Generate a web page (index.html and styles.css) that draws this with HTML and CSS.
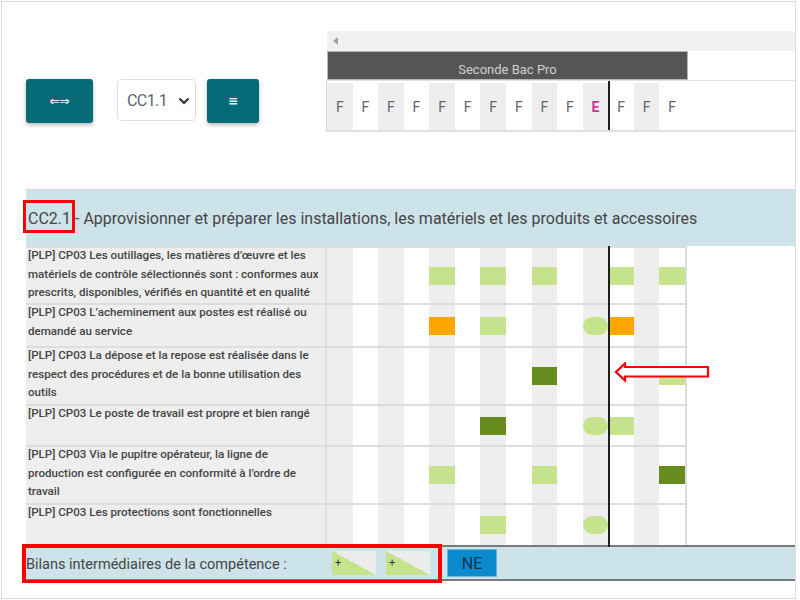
FILE: index.html
```html
<!DOCTYPE html>
<html lang="fr">
<head>
<meta charset="utf-8">
<title>Compétences</title>
<link rel="stylesheet" href="styles.css">
</head>
<body>
<div class="frame">
  <div class="top">
    <div class="controls">
      <button class="btn btn-wide">⇐⇒</button>
      <div class="select"><span>CC1.1</span><svg class="chev" width="12" height="8" viewBox="0 0 12 8"><path d="M1.5 1.5 L6 6 L10.5 1.5" fill="none" stroke="#333" stroke-width="2.2"/></svg></div>
      <button class="btn btn-narrow">≡</button>
    </div>
    <div class="timeline">
      <div class="scroll"><svg width="5" height="8" viewBox="0 0 5 8"><path d="M5 0 L0 4 L5 8 Z" fill="#a3a3a3"/></svg></div>
      <div class="period">Seconde Bac Pro</div>
      <div class="letters">
        <div class="grid14">
          <span class="col">F</span><span class="col">F</span><span class="col">F</span><span class="col">F</span><span class="col">F</span><span class="col">F</span><span class="col">F</span><span class="col">F</span><span class="col">F</span><span class="col">F</span><span class="col col-e">E</span><span class="col now">F</span><span class="col">F</span><span class="col">F</span>
        </div>
      </div>
    </div>
  </div>

  <div class="comp">
    <div class="comp-head">CC2.1 - Approvisionner et préparer les installations, les matériels et les produits et accessoires</div>

    <div class="row h57">
      <div class="label"><p>[PLP] CP03 Les outillages, les matières d’œuvre et les matériels de contrôle sélectionnés sont : conformes aux prescrits, disponibles, vérifiés en quantité et en qualité</p></div>
      <div class="cells grid14">
        <span class="cell"></span><span class="cell"></span><span class="cell"></span><span class="cell"></span><span class="cell"><i class="m lg"></i></span><span class="cell"></span><span class="cell"><i class="m lg"></i></span><span class="cell"></span><span class="cell"><i class="m lg"></i></span><span class="cell"></span><span class="cell"></span><span class="cell now"><i class="m lg"></i></span><span class="cell"></span><span class="cell"><i class="m lg"></i></span>
      </div>
    </div>

    <div class="row h43">
      <div class="label"><p>[PLP] CP03 L’acheminement aux postes est réalisé ou demandé au service</p></div>
      <div class="cells grid14">
        <span class="cell"></span><span class="cell"></span><span class="cell"></span><span class="cell"></span><span class="cell"><i class="m or"></i></span><span class="cell"></span><span class="cell"><i class="m lg"></i></span><span class="cell"></span><span class="cell"></span><span class="cell"></span><span class="cell"><i class="m lg pill"></i></span><span class="cell now"><i class="m or"></i></span><span class="cell"></span><span class="cell"></span>
      </div>
    </div>

    <div class="row h58">
      <div class="label"><p>[PLP] CP03 La dépose et la repose est réalisée dans le respect des procédures et de la bonne utilisation des outils</p></div>
      <div class="cells grid14">
        <span class="cell"></span><span class="cell"></span><span class="cell"></span><span class="cell"></span><span class="cell"></span><span class="cell"></span><span class="cell"></span><span class="cell"></span><span class="cell"><i class="m dg"></i></span><span class="cell"></span><span class="cell"></span><span class="cell now"></span><span class="cell"></span><span class="cell"><i class="m lg"></i></span>
      </div>
    </div>

    <div class="row h41">
      <div class="label"><p>[PLP] CP03 Le poste de travail est propre et bien rangé</p></div>
      <div class="cells grid14">
        <span class="cell"></span><span class="cell"></span><span class="cell"></span><span class="cell"></span><span class="cell"></span><span class="cell"></span><span class="cell"><i class="m dg"></i></span><span class="cell"></span><span class="cell"></span><span class="cell"></span><span class="cell"><i class="m lg pill"></i></span><span class="cell now"><i class="m lg"></i></span><span class="cell"></span><span class="cell"></span>
      </div>
    </div>

    <div class="row h58">
      <div class="label"><p>[PLP] CP03 Via le pupitre opérateur, la ligne de production est configurée en conformité à l’ordre de travail</p></div>
      <div class="cells grid14">
        <span class="cell"></span><span class="cell"></span><span class="cell"></span><span class="cell"></span><span class="cell"><i class="m lg"></i></span><span class="cell"></span><span class="cell"></span><span class="cell"></span><span class="cell"><i class="m lg"></i></span><span class="cell"></span><span class="cell"></span><span class="cell now"></span><span class="cell"></span><span class="cell"><i class="m dg"></i></span>
      </div>
    </div>

    <div class="row h42">
      <div class="label"><p>[PLP] CP03 Les protections sont fonctionnelles</p></div>
      <div class="cells grid14">
        <span class="cell"></span><span class="cell"></span><span class="cell"></span><span class="cell"></span><span class="cell"></span><span class="cell"></span><span class="cell"><i class="m lg"></i></span><span class="cell"></span><span class="cell"></span><span class="cell"></span><span class="cell"><i class="m lg pill"></i></span><span class="cell now"></span><span class="cell"></span><span class="cell"></span>
      </div>
    </div>

    <div class="bilan">
      <div class="bilan-label">Bilans intermédiaires de la compétence :</div>
      <div class="tri">+</div>
      <div class="tri">+</div>
      <div class="ne">NE</div>
    </div>
  </div>

  <div class="anno anno-1"></div>
  <div class="anno anno-2"></div>
  <svg class="anno-arrow" width="98" height="22" viewBox="0 0 98 22"><path d="M2 10 L11 1.5 L11 5 L94 5 L94 14.5 L11 14.5 L11 18.5 Z" fill="#fff" stroke="#f00" stroke-width="2.2" stroke-linejoin="miter"/></svg>
</div>
</body>
</html>
```

FILE: styles.css
```css
html, body {
  margin: 0;
  padding: 0;
  background: #fff;
}

body {
  font-family: Roboto, "Liberation Sans", sans-serif;
  color: #444;
}

.frame {
  position: relative;
  margin: 1px;
  width: 795px;
  height: 598px;
  box-sizing: border-box;
  border: 1px solid #dcdcdc;
  padding: 29px 0 0 24px;
  overflow: hidden;
}

/* ---------- top bar ---------- */
.top {
  display: flex;
}

.controls {
  width: 301px;
  flex: none;
  display: flex;
  align-items: flex-start;
  margin-top: 48px;
}

.btn {
  height: 44px;
  border: 0;
  border-radius: 3px;
  background: #056b76;
  color: #e8f2f3;
  font-family: "DejaVu Sans", sans-serif;
  font-weight: 700;
  font-size: 12px;
  padding: 0;
  box-shadow: 0 2px 4px rgba(0, 0, 0, 0.28);
}

.btn-wide {
  width: 67px;
  font-size: 12px;
  letter-spacing: 0;
}

.btn-narrow {
  width: 52px;
  margin-left: 11px;
}

.select {
  margin-left: 24px;
  width: 79px;
  height: 42px;
  box-sizing: border-box;
  border: 1px solid #dcdcdc;
  border-radius: 4px;
  display: flex;
  align-items: center;
  justify-content: space-between;
  padding: 0 5px 0 9px;
  font-size: 16px;
  color: #5a6572;
  letter-spacing: -0.6px;
}

.chev {
  margin-top: 2px;
}

.timeline {
  flex: 1;
}

.scroll {
  height: 20px;
  background: #f1f1f1;
  display: flex;
  align-items: center;
  padding-left: 6px;
}

.period {
  width: 361px;
  height: 29px;
  box-sizing: border-box;
  background: #555;
  border: 1px solid #b5b5b5;
  display: flex;
  align-items: flex-end;
  justify-content: center;
  padding-bottom: 2px;
  font-size: 13px;
  color: #cfcfcf;
}

.letters {
  margin-left: -1px;
  border-left: 1px solid #ddd;
  border-top: 1px solid #e2e2e2;
  border-bottom: 2px solid #e0e0e0;
  padding-top: 2px;
}

.grid14 {
  display: grid;
  grid-template-columns: repeat(14, 1fr);
}

.letters .grid14 {
  width: 358px;
  height: 47px;
}

.col {
  display: flex;
  align-items: center;
  justify-content: center;
  font-size: 14px;
  color: #5b6672;
  position: relative;
}

.col:nth-child(odd) {
  background: #eee;
}

.col-e {
  color: #d6338f;
  font-weight: 700;
}

.now::before {
  content: "";
  position: absolute;
  left: 0;
  top: -2px;
  bottom: -2px;
  width: 2px;
  background: #1e1e1e;
  z-index: 2;
}

.col.now::before {
  top: -2px;
  bottom: 0;
}

/* ---------- competence block ---------- */
.comp {
  margin-top: 57px;
}

.comp-head {
  height: 57px;
  box-sizing: border-box;
  border-top: 1px solid #d8d8d8;
  background: #cde3ea;
  display: flex;
  align-items: center;
  padding-left: 2px;
  font-size: 16px;
  color: #454545;
}

.row {
  display: flex;
  box-sizing: border-box;
}

.h57 { height: 57px; }
.h43 { height: 43px; }
.h58 { height: 58px; }
.h41 { height: 41px; }
.h42 { height: 42px; }

.label {
  width: 301px;
  flex: none;
  box-sizing: border-box;
  background: #eee;
  border-top: 2px solid #ddd;
  border-right: 2px solid #ddd;
  padding: 0 2px;
  font-size: 11.6px;
  font-weight: 500;
  line-height: 18.6px;
  color: #444;
}

.label p {
  margin: -2px 0 0;
}

.cells {
  width: 360px;
  box-sizing: border-box;
  border-top: 2px solid #ddd;
  border-right: 2px solid #ddd;
}

.cell {
  display: flex;
  align-items: center;
  position: relative;
}

.cell:nth-child(odd) {
  background: #eee;
}

.m {
  display: block;
  width: 100%;
  height: 18px;
}

.lg { background: #c5e38c; }
.dg { background: #678c1e; }
.or { background: #ffa500; }

.pill {
  border-radius: 9px;
}

/* ---------- bilan ---------- */
.bilan {
  height: 36px;
  box-sizing: border-box;
  border-top: 2px solid #7b7b7b;
  border-bottom: 2px solid #7b7b7b;
  background: #cde3ea;
  display: flex;
  align-items: center;
}

.bilan-label {
  width: 306px;
  flex: none;
  font-size: 14.5px;
  color: #454545;
  padding-top: 2px;
}

.tri {
  width: 44px;
  height: 24px;
  margin-right: 10px;
  background: linear-gradient(to top right, #c5e38c 50%, #ececec 50%);
  font-size: 11px;
  line-height: 24px;
  padding-left: 3px;
  box-sizing: border-box;
  color: #333;
}

.ne {
  margin-left: 7px;
  width: 50px;
  height: 28px;
  box-sizing: border-box;
  background: #0a8bd0;
  border: 1px solid #6bb6e0;
  display: flex;
  align-items: center;
  justify-content: center;
  font-size: 16px;
  color: #17334a;
}

/* ---------- annotations ---------- */
.anno {
  position: absolute;
  box-sizing: border-box;
  border: 3px solid #f00;
}

.anno-1 {
  left: 21px;
  top: 198px;
  width: 52px;
  height: 33px;
}

.anno-2 {
  left: 20px;
  top: 542px;
  width: 420px;
  height: 39px;
  border-width: 4px 4px 3px 4px;
}

.anno-arrow {
  position: absolute;
  left: 612px;
  top: 360px;
}
```
